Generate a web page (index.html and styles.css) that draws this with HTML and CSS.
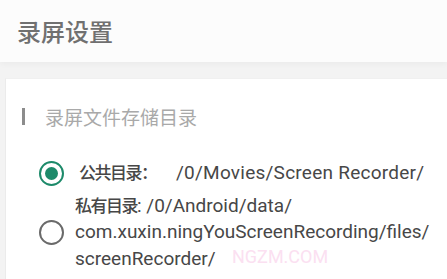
FILE: index.html
```html
<!DOCTYPE html>
<html lang="zh-CN">
<head>
    <meta charset="UTF-8">
    <meta name="viewport" content="width=device-width, initial-scale=1.0">
    <title>录屏设置</title>
    <link rel="stylesheet" href="styles.css">
</head>
<body>
    <div class="header">
        <h1>录屏设置</h1>
    </div>

    <div class="card">
        <div class="section-title">
            <span class="bar"></span>
            <span>录屏文件存储目录</span>
        </div>

        <div class="option first">
            <span class="radio checked"></span>
            <div class="option-text"><span class="cjk">公共目录：</span>&nbsp;&nbsp;<span class="path">/0/Movies/Screen Recorder/</span></div>
        </div>

        <div class="option">
            <span class="radio"></span>
            <div class="option-text"><span class="cjk">私有目录</span>: /0/Android/data/<br>com.xuxin.ningYouScreenRecording/files/<br>screenRecorder/</div>
        </div>
    </div>

    <div class="watermark">NGZM.COM</div>
</body>
</html>
```

FILE: styles.css
```css
body {
    margin: 0;
    height: 279px;
    background: #f3f3f3;
    font-family: Roboto, "Noto Sans CJK SC", sans-serif;
    color: #4a4a4a;
    overflow: hidden;
}

.header {
    height: 62px;
    background: #fcfcfc;
    padding-left: 17px;
    box-shadow: 0 2px 6px rgba(0, 0, 0, 0.04);
}

.header h1 {
    margin: 0;
    font-size: 24px;
    font-weight: 500;
    line-height: 66px;
    color: #707070;
}

.card {
    box-sizing: border-box;
    margin: 16px 0 0 5px;
    height: 201px;
    background: #fff;
    border-left: 1px solid #ebebeb;
    border-top: 1px solid #f0f0f0;
    padding: 24px 0 0 16px;
}

.section-title {
    display: flex;
    align-items: center;
    font-size: 19px;
    color: #a9a9a9;
    height: 26px;
}

.bar {
    width: 3px;
    height: 17px;
    background: #8c8c8c;
    margin-right: 20px;
}

.option {
    display: flex;
    align-items: center;
    margin-top: 6px;
}

.option.first {
    margin-top: 31px;
}

.radio {
    width: 21px;
    height: 21px;
    border: 2.5px solid #6a6a6a;
    border-radius: 50%;
    margin: 0 11px 0 17px;
    flex-shrink: 0;
    box-sizing: content-box;
    position: relative;
}

.radio.checked {
    border-color: #1d8a6a;
    margin-right: 15px;
}

.radio.checked::after {
    content: "";
    position: absolute;
    left: 4px;
    top: 4px;
    width: 13px;
    height: 13px;
    border-radius: 50%;
    background: #1d8a6a;
}

.option-text {
    font-size: 19px;
    line-height: 26.5px;
    color: #474747;
    white-space: nowrap;
}

.cjk {
    font-size: 17px;
    letter-spacing: -1.5px;
    font-weight: 500;
}

.first .cjk {
    margin-right: 10px;
}

.path {
    letter-spacing: 0.25px;
}

.watermark {
    position: absolute;
    left: 232px;
    top: 248px;
    font-size: 18px;
    line-height: 1;
    color: #fbe0f1;
    font-family: Roboto, sans-serif;
}
```
